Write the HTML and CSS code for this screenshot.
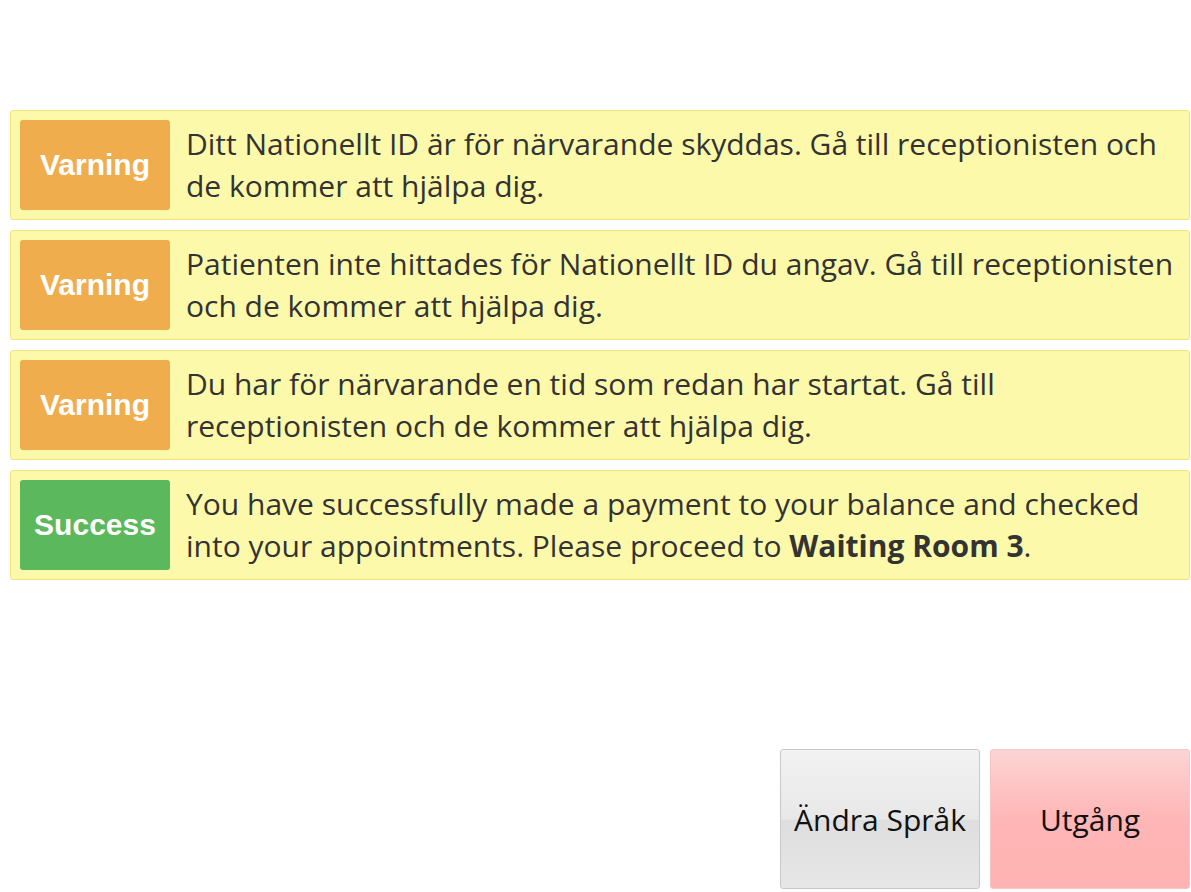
FILE: index.html
```html
<!DOCTYPE html>
<html lang="sv">
<head>
    <meta charset="UTF-8">
    <meta name="viewport" content="width=device-width, initial-scale=1.0">
    <title>Incheckning</title>
    <link rel="stylesheet" href="styles.css">
</head>
<body>

<div class="page">
    <div class="alerts">
        <div class="alert">
            <span class="label label-warning">Varning</span>
            <p class="message">Ditt Nationellt ID är för närvarande skyddas. Gå till receptionisten och de kommer att hjälpa dig.</p>
        </div>
        <div class="alert">
            <span class="label label-warning">Varning</span>
            <p class="message">Patienten inte hittades för Nationellt ID du angav. Gå till receptionisten och de kommer att hjälpa dig.</p>
        </div>
        <div class="alert">
            <span class="label label-warning">Varning</span>
            <p class="message">Du har för närvarande en tid som redan har startat. Gå till receptionisten och de kommer att hjälpa dig.</p>
        </div>
        <div class="alert">
            <span class="label label-success">Success</span>
            <p class="message">You have successfully made a payment to your balance and checked into your appointments. Please proceed to <strong>Waiting Room 3</strong>.</p>
        </div>
    </div>

    <div class="actions">
        <button class="btn btn-default">Ändra Språk</button>
        <button class="btn btn-exit">Utgång</button>
    </div>
</div>

</body>
</html>
```

FILE: styles.css
```css
body {
    margin: 0;
    font-family: "Open Sans", "Noto Sans", sans-serif;
    color: #333;
    background-color: #fff;
}
.page {
    height: 100vh;
    box-sizing: border-box;
    padding: 110px 1px 3px 10px;
    display: flex;
    flex-direction: column;
    justify-content: space-between;
}
.alerts {
    display: flex;
    flex-direction: column;
    gap: 10px;
}
.alert {
    display: flex;
    align-items: flex-start;
    gap: 16px;
    padding: 9px;
    min-height: 90px;
    background-color: #fdf9aa;
    border: 1px solid #f5e27f;
    border-radius: 3px;
}
.label {
    flex: 0 0 150px;
    height: 90px;
    display: flex;
    align-items: center;
    justify-content: center;
    border-radius: 3px;
    color: #fff;
    font-family: "Liberation Sans", Arial, sans-serif;
    font-weight: bold;
    font-size: 30px;
}
.label-warning {
    background-color: #f0ad4e;
}
.label-success {
    background-color: #5cb85c;
}
.message {
    margin: 0;
    padding-top: 3px;
    font-size: 30px;
    line-height: 42px;
}
.actions {
    display: flex;
    justify-content: flex-end;
    gap: 10px;
}
.btn {
    width: 200px;
    height: 140px;
    font-family: "Open Sans", "Noto Sans", sans-serif;
    font-size: 30px;
    color: #111;
    border-radius: 3px;
    cursor: pointer;
}
.btn-default {
    border: 1px solid #c8c8c8;
    background: linear-gradient(to bottom, #f2f2f2 0%, #e8e8e8 50%, #dedede 51%, #e6e6e6 100%);
}
.btn-exit {
    border: 1px solid #fbc4c4;
    background: linear-gradient(to bottom, #fcd4d4 0%, #ffb6b6 50%, #ffb3b3 100%);
}
```
